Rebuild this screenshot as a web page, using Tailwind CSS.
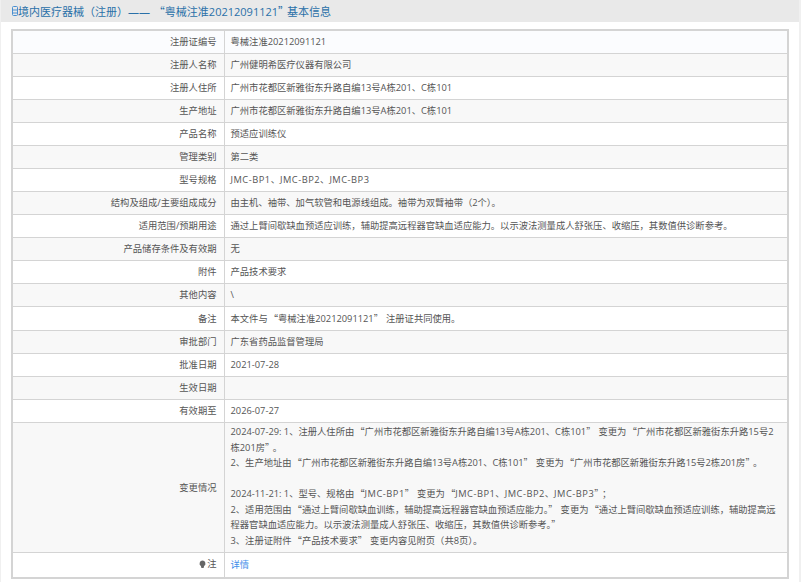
<!DOCTYPE html>
<html lang="zh-CN"><head><meta charset="utf-8"><script src="https://cdn.jsdelivr.net/npm/@tailwindcss/browser@4"></script></head>
<body class="bg-white overflow-hidden">
<div class="w-[801px] h-[582px] overflow-hidden border-l border-r-2 border-[#f0f0f0] text-[9.3px] text-[#555] font-['Open_Sans','Noto_Sans_CJK_SC',sans-serif] [&_q]:font-['Noto_Sans_CJK_SC'] [&_q]:[quotes:none] [&_q]:ml-[1px] [&_em]:font-['Noto_Sans_CJK_SC'] [&_em]:not-italic [&_em]:mr-[3px] [&_i]:not-italic [&_i]:tracking-[.5px]">
<h1 class="h-[22px] bg-[#e9e9e9] pl-[11px] text-[11px] leading-[20px] font-normal text-[#2a70a8] flex items-center"><svg class="w-[6px] h-[10px] shrink-0" viewBox="0 0 6 10"><path d="M.5 1.5q0-1 1-1h3q1 0 1 1v7q0 1-1 1h-3q-1 0-1-1zM.5 4h5M.5 7h5" fill="none" stroke="#4a8fd0"/></svg><span>境内医疗器械（注册）—— <q>“</q>粤械注准20212091121<q class="!ml-0 -mr-[2px]">”</q>基本信息</span></h1>
<div class="pt-[7px] pl-[10px] w-[789px]">
<table class="w-[778px] table-fixed border-collapse border-2 border-[#d4d4d4] leading-[22px]">
<colgroup><col class="w-[212px]"><col></colgroup>
<tbody class="[&_tr]:h-[23px] [&_td]:border-b [&_td]:border-[#d4d4d4] [&_td:first-child]:border-r [&_td:first-child]:text-right [&_td:first-child]:pr-[7px] [&_td:last-child]:pl-[6px] [&_td:last-child]:pr-[8px] [&_tr:nth-child(even)]:bg-[#f8f8f8]">
<tr class="bg-[#fbfcfe]"><td>注册证编号</td><td>粤械注准20212091121</td></tr>
<tr><td>注册人名称</td><td>广州健明希医疗仪器有限公司</td></tr>
<tr><td>注册人住所</td><td>广州市花都区新雅街东升路自编13号A栋201、C栋101</td></tr>
<tr><td>生产地址</td><td>广州市花都区新雅街东升路自编13号A栋201、C栋101</td></tr>
<tr><td>产品名称</td><td>预适应训练仪</td></tr>
<tr><td>管理类别</td><td>第二类</td></tr>
<tr><td>型号规格</td><td><i>JMC-BP1</i>、<i>JMC-BP2</i>、<i>JMC-BP3</i></td></tr>
<tr><td>结构及组成/主要组成成分</td><td>由主机、袖带、加气软管和电源线组成。袖带为双臂袖带（2个）。</td></tr>
<tr><td>适用范围/预期用途</td><td>通过上臂间歇缺血预适应训练，辅助提高远程器官缺血适应能力。以示波法测量成人舒张压、收缩压，其数值供诊断参考。</td></tr>
<tr><td>产品储存条件及有效期</td><td>无</td></tr>
<tr><td>附件</td><td>产品技术要求</td></tr>
<tr><td>其他内容</td><td>\</td></tr>
<tr><td>备注</td><td>本文件与<q>“</q>粤械注准20212091121<em>”</em>注册证共同使用。</td></tr>
<tr><td>审批部门</td><td>广东省药品监督管理局</td></tr>
<tr><td>批准日期</td><td>2021-07-28</td></tr>
<tr><td>生效日期</td><td></td></tr>
<tr><td>有效期至</td><td>2026-07-27</td></tr>
<tr><td>变更情况</td><td class="leading-[15.5px] pt-[1px] pb-[4px]">2024-07-29: 1、注册人住所由<q>“</q>广州市花都区新雅街东升路自编13号A栋201、C栋101<em>”</em>变更为<q>“</q>广州市花都区新雅街东升路15号2栋201房<em>”</em>。<br>2、生产地址由<q>“</q>广州市花都区新雅街东升路自编13号A栋201、C栋101<em>”</em>变更为<q>“</q>广州市花都区新雅街东升路15号2栋201房<em>”</em>。<br><br>2024-11-21: 1、型号、规格由<q>“</q><i>JMC-BP1</i><em>”</em>变更为<q>“</q><i>JMC-BP1</i>、<i>JMC-BP2</i>、<i>JMC-BP3</i><em>”</em>；<br>2、适用范围由<q>“</q>通过上臂间歇缺血训练，辅助提高远程器官缺血预适应能力。<em>”</em>变更为<q>“</q>通过上臂间歇缺血预适应训练，辅助提高远程器官缺血适应能力。以示波法测量成人舒张压、收缩压，其数值供诊断参考。<em>”</em><br>3、注册证附件<q>“</q>产品技术要求<em>”</em>变更内容见附页（共8页）。</td></tr>
<tr class="!h-[25px]"><td><span class="inline-flex items-center justify-end gap-[1px]"><svg class="w-[7px] h-[9px]" viewBox="0 0 7 9"><path d="M3.5 0.5a3 3 0 0 1 1.6 5.5L4.6 8H2.4L1.9 6A3 3 0 0 1 3.5 .5z" fill="#666"/></svg>注</span></td><td><a class="text-[#3f8fea]" href="#">详情</a></td></tr>
</tbody></table>
</div></div>
</body></html>
